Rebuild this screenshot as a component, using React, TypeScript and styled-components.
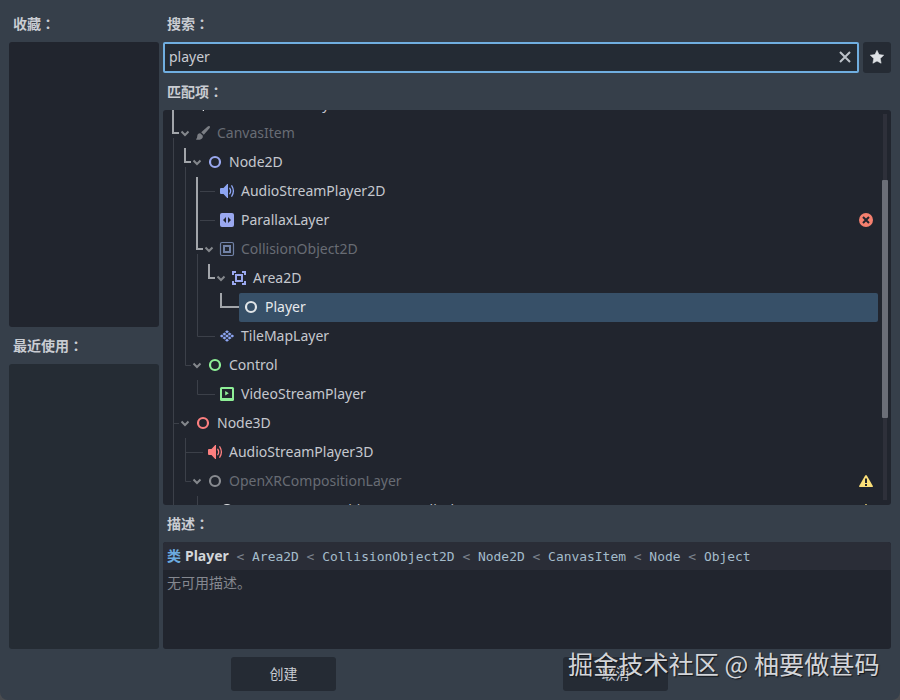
import React from "react";
import styled, { createGlobalStyle } from "styled-components";

const uiFont = '"Noto Sans", "Noto Sans CJK SC", sans-serif';

const GlobalStyle = createGlobalStyle`
  * { box-sizing: border-box; }
  body { margin: 0; background: #4a4c50; }
`;

const Dialog = styled.div`
  position: relative;
  width: 900px;
  height: 700px;
  overflow: hidden;
  display: flex;
  flex-direction: column;
  background: #363f4a;
  border-radius: 0 0 8px 8px;
  font: 14px/20px ${uiFont};
  color: #c9ccd2;
`;

const Columns = styled.div`
  display: grid;
  grid-template-columns: 150px 728px;
  column-gap: 4px;
  padding: 0 9px;
  height: 649px;
`;

const Column = styled.div`
  display: flex;
  flex-direction: column;
  min-height: 0;
`;

const Caption = styled.div<{ $first?: boolean }>`
  flex: none;
  height: ${(p) => (p.$first ? 42 : 37)}px;
  padding: ${(p) => (p.$first ? 13 : 8)}px 4px 0;
  font-family: "Noto Sans CJK SC", sans-serif;
  font-weight: 600;
  white-space: nowrap;
`;

const Colon = styled.span`
  font-family: "Noto Sans CJK JP", sans-serif;
`;

const Panel = styled.div<{ $height: number; $tone?: string }>`
  flex: none;
  height: ${(p) => p.$height}px;
  background: ${(p) => p.$tone || "#21252e"};
  border-radius: 3px;
  overflow: hidden;
`;

const SearchRow = styled.div`
  display: flex;
  gap: 4px;
  height: 31px;
`;

const SearchField = styled.div`
  flex: 1;
  display: flex;
  align-items: center;
  justify-content: space-between;
  padding: 0 4px 2px;
  background: #242b34;
  border: 2px solid #70aee0;
  border-radius: 2px;
`;

const StarButton = styled.div`
  width: 28px;
  display: grid;
  place-items: center;
  padding-bottom: 1px;
  background: #252b34;
  border-radius: 3px;
`;

const TreePanel = styled(Panel)`
  display: flex;
  gap: 4px;
`;

const TreeRows = styled.div`
  width: 715px;
  margin-top: -20px;
`;

const TreeRow = styled.div`
  display: flex;
  height: 29px;
`;

const Gutter = styled.svg`
  flex: none;
  display: block;
`;

const RowCell = styled.div<{ $selected?: boolean; $muted?: boolean }>`
  flex: 1;
  display: flex;
  align-items: center;
  gap: 6px;
  padding: 0 4px 1px;
  border-radius: 2px;
  background: ${(p) => (p.$selected ? "#375068" : "transparent")};
  color: ${(p) => (p.$selected ? "#e6e9ec" : p.$muted ? "#686c74" : "#c5c8ce")};
`;

const RowLabel = styled.span`
  flex: 1;
  height: 20px;
  line-height: 19px;
  white-space: nowrap;
`;

const Icon = styled.svg`
  flex: none;
  display: block;
  width: 16px;
  height: 16px;
`;

const Scrollbar = styled.div`
  display: flex;
  flex-direction: column;
  align-items: center;
  width: 6px;
  padding: 4px 0 5px;
`;

const Track = styled.div<{ $height: number }>`
  width: 4px;
  height: ${(p) => p.$height}px;
  background: #2e303a;
`;

const Thumb = styled.div`
  width: 6px;
  height: 238px;
  border-radius: 1px;
  background: #6b6e77;
`;

const DescHeader = styled.div`
  display: flex;
  align-items: center;
  height: 28px;
  padding: 0 4px;
  background: #2a2d37;
`;

const Kind = styled.span`
  width: 18px;
  color: #6cabe0;
  font-weight: 700;
`;

const ClassName = styled.span`
  width: 51.5px;
  font-weight: 700;
  color: #d3d6da;
`;

const Lineage = styled.span`
  padding-top: 2px;
  font: 12.950px/20px "DejaVu Sans Mono", monospace;
  color: #a4bccb;
  white-space: pre;
`;

const Less = styled.span`
  color: #7c838d;
`;

const DescText = styled.div`
  padding: 3px 4px;
  color: #858890;
`;

const Footer = styled.div`
  display: flex;
  gap: 227px;
  padding: 8px 0 0 231px;
`;

const Button = styled.div`
  width: 105px;
  height: 34px;
  line-height: 33px;
  text-align: center;
  background: #252b34;
  border-radius: 3px;
`;

const Watermark = styled.div`
  position: absolute;
  left: 568px;
  top: 645px;
  font: 25.150px/36px "Noto Sans CJK SC", sans-serif;
  color: #d3d5d9;
  text-shadow: 1px 1px 1px #14161a;
  white-space: nowrap;
`;

type IconName =
  | "audio" | "brush" | "ring" | "parallax" | "collision" | "area"
  | "tiles" | "video" | "error" | "warning" | "star" | "clear";

const dark = "#21252e";

function Glyph({ name, color = "#8da5f3" }: { name: IconName; color?: string }) {
  const shapes: Record<IconName, React.ReactNode> = {
    audio: (
      <>
        <path fill={color} d="M9 1v14h-.8L4.500 11H2a1 1 0 0 1-1-1V6a1 1 0 0 1 1-1h2.500l3.700-4z" />
        <path fill="none" stroke={color} strokeWidth="1.300" strokeLinecap="round" d="M10.800 5.300q1.700 2.700 0 5.400M12.800 2.800q3.200 5.200 0 10.400" />
      </>
    ),
    brush: (
      <path fill={color} d="M14.700 1.300c-.6-.6-1.400-.4-2 .1L6.200 7.200l2.600 2.600 5.700-6.500c.5-.6.700-1.500.200-2zM5.200 8.300c-1.800-.1-2.700 1-2.900 2.400C2.200 12.300 1.800 13.600.8 14.400c2.900.9 6.100.1 6.800-1.700.4-1.200.200-2.200-.200-2.500z" />
    ),
    ring: <circle cx="8" cy="8" r="5" fill="none" stroke={color} strokeWidth="2.200" />,
    parallax: (
      <>
        <rect x="1" y="1" width="14" height="14" rx="2" fill={color} />
        <path fill={dark} d="M7 5v6L4 8zM9 5v6l3-3z" />
      </>
    ),
    collision: (
      <>
        <rect x="1.500" y="1.500" width="13" height="13" rx="1.500" fill="none" stroke={color} strokeWidth="1.200" />
        <rect x="5" y="5" width="6" height="6" fill="none" stroke={color} strokeWidth="2" />
      </>
    ),
    area: (
      <g fill="none" stroke={color} strokeWidth="2">
        <path d="M2 5V2h3M11 2h3v3M14 11v3h-3M5 14H2v-3" />
        <rect x="5" y="5" width="6" height="6" />
      </g>
    ),
    tiles: (
      <path
        fill={color}
        d="M8 2.300l2 1.500-2 1.500-2-1.500zM5.400 4.400l2 1.500-2 1.500-2-1.500zM10.600 4.400l2 1.500-2 1.500-2-1.500zM2.800 6.500l2 1.500-2 1.500-2-1.500zM8 6.500l2 1.500-2 1.500-2-1.500zM13.200 6.500l2 1.500-2 1.500-2-1.500zM5.400 8.600l2 1.500-2 1.500-2-1.500zM10.600 8.600l2 1.500-2 1.500-2-1.500zM8 10.700l2 1.500-2 1.500-2-1.500z"
      />
    ),
    video: (
      <>
        <rect x="1" y="1" width="14" height="14" rx="1.500" fill={color} />
        <rect x="3" y="3" width="10" height="9" fill={dark} />
        <path fill={color} d="M6.200 5v4.400L9.800 7.200z" />
      </>
    ),
    error: (
      <>
        <circle cx="8" cy="8" r="7" fill="#f5806f" />
        <path d="M5 5l6 6M11 5l-6 6" stroke={dark} strokeWidth="2" />
      </>
    ),
    warning: (
      <>
        <path fill="#fbdf78" d="M7.300 2.200h1.400L15 13.200 14.500 14h-13L1 13.200z" />
        <path fill={dark} d="M7 5.500h2V10H7zM7 11h2v2H7z" />
      </>
    ),
    star: (
      <path fill="#dfe2e6" stroke="#dfe2e6" strokeWidth=".6" strokeLinejoin="round" d="M8 1.400l2 4.200 4.700.600-3.500 3.300.900 4.700L8 12l-4.100 2.200.900-4.700L1.300 6.200 6 5.600z" />
    ),
    clear: <path d="M3 3l10 10M13 3L3 13" stroke="#bcc2c9" strokeWidth="2" fill="none" />,
  };
  return <Icon viewBox="0 0 16 16">{shapes[name]}</Icon>;
}

interface Item {
  label: string;
  depth: number;
  icon: IconName;
  color?: string;
  thin?: string;
  strong?: string;
  open?: boolean;
  muted?: boolean;
  selected?: boolean;
  badge?: IconName;
}

const purple = "#9aa8ef";
const green = "#8eef97";
const red = "#fc7f7f";

// Guide paths use the row's own coordinates: one level every 12px, rows 29px high.
const items: Item[] = [
  { label: "AudioStreamPlayer", depth: 0, icon: "audio", color: "#dfe1e4", strong: "M10 0V29" },
  { label: "CanvasItem", depth: 0, icon: "brush", color: "#7b7e84", open: true, muted: true, strong: "M10 0V14H16", thin: "M10.5 19V29" },
  { label: "Node2D", depth: 1, icon: "ring", color: purple, open: true, strong: "M22 0V14H28", thin: "M10.500 0V29M22.500 19V29" },
  { label: "AudioStreamPlayer2D", depth: 2, icon: "audio", strong: "M34 0V29", thin: "M10.500 0V29M22.500 0V29M37 14.500H52" },
  { label: "ParallaxLayer", depth: 2, icon: "parallax", color: purple, badge: "error", strong: "M34 0V29", thin: "M10.500 0V29M22.500 0V29M37 14.500H52" },
  { label: "CollisionObject2D", depth: 2, icon: "collision", color: "#7182a6", open: true, muted: true, strong: "M34 0V14H40", thin: "M10.500 0V29M22.500 0V29M34.500 19V29" },
  { label: "Area2D", depth: 3, icon: "area", color: purple, open: true, strong: "M46 0V14H52", thin: "M10.500 0V29M22.500 0V29M34.500 0V29" },
  { label: "Player", depth: 4, icon: "ring", color: "#e1e5e8", selected: true, strong: "M58 0V14H76", thin: "M10.500 0V29M22.500 0V29M34.500 0V29" },
  { label: "TileMapLayer", depth: 2, icon: "tiles", thin: "M10.500 0V29M22.500 0V29M34.500 0V14.500H52" },
  { label: "Control", depth: 1, icon: "ring", color: green, open: true, thin: "M10.500 0V29M22.500 0V14.500H28" },
  { label: "VideoStreamPlayer", depth: 2, icon: "video", color: green, thin: "M10.500 0V29M34.500 0V14.500H52" },
  { label: "Node3D", depth: 0, icon: "ring", color: red, open: true, thin: "M10.500 0V29M10.500 14.500H16" },
  { label: "AudioStreamPlayer3D", depth: 1, icon: "audio", color: red, thin: "M10.500 0V29M22.500 0V29M22.500 14.500H40" },
  { label: "OpenXRCompositionLayer", depth: 1, icon: "ring", color: "#888b90", open: true, muted: true, badge: "warning", thin: "M10.500 0V29M22.500 0V14.500H28" },
  { label: "OpenXRCompositionLayerCylinder", depth: 2, icon: "ring", color: "#dfe1e4", badge: "warning", thin: "M10.500 0V29M34.500 0V29" },
];

function TreeItem({ item }: { item: Item }) {
  const width = 28 + item.depth * 12;
  const cx = 22 + item.depth * 12;
  return (
    <TreeRow>
      <Gutter width={width} height={29} fill="none">
        {item.thin && <path d={item.thin} stroke="#3c4049" />}
        {item.strong && <path d={item.strong} stroke="#a2a5aa" strokeWidth="2" />}
        {item.open && <path d={`M${cx - 3.5} 12.500l3.500 3.500 3.500-3.500`} stroke="#84878c" strokeWidth="2" />}
      </Gutter>
      <RowCell $selected={item.selected} $muted={item.muted}>
        <Glyph name={item.icon} color={item.color} />
        <RowLabel>{item.label}</RowLabel>
        {item.badge && <Glyph name={item.badge} />}
      </RowCell>
    </TreeRow>
  );
}

const ancestors = ["Area2D", "CollisionObject2D", "Node2D", "CanvasItem", "Node", "Object"];

export default function App() {
  return (
    <>
      <GlobalStyle />
      <Dialog>
        <Columns>
          <Column>
            <Caption $first>收藏<Colon>：</Colon></Caption>
            <Panel $height={285} />
            <Caption>最近使用<Colon>：</Colon></Caption>
            <Panel $height={285} $tone="#252c34" />
          </Column>
          <Column>
            <Caption $first>搜索<Colon>：</Colon></Caption>
            <SearchRow>
              <SearchField>
                <span>player</span>
                <Glyph name="clear" />
              </SearchField>
              <StarButton><Glyph name="star" /></StarButton>
            </SearchRow>
            <Caption>匹配项<Colon>：</Colon></Caption>
            <TreePanel $height={395}>
              <TreeRows>
                {items.map((item) => <TreeItem key={item.label} item={item} />)}
              </TreeRows>
              <Scrollbar>
                <Track $height={66} />
                <Thumb />
                <Track $height={82} />
              </Scrollbar>
            </TreePanel>
            <Caption>描述<Colon>：</Colon></Caption>
            <Panel $height={107}>
              <DescHeader>
                <Kind>类</Kind>
                <ClassName>Player</ClassName>
                <Lineage>
                  {ancestors.map((name) => (
                    <React.Fragment key={name}><Less>{name === "Area2D" ? "< " : " < "}</Less>{name}</React.Fragment>
                  ))}
                </Lineage>
              </DescHeader>
              <DescText>无可用描述。</DescText>
            </Panel>
          </Column>
        </Columns>
        <Footer>
          <Button>创建</Button>
          <Button>取消</Button>
        </Footer>
        <Watermark>掘金技术社区 @ 柚要做甚码</Watermark>
      </Dialog>
    </>
  );
}
